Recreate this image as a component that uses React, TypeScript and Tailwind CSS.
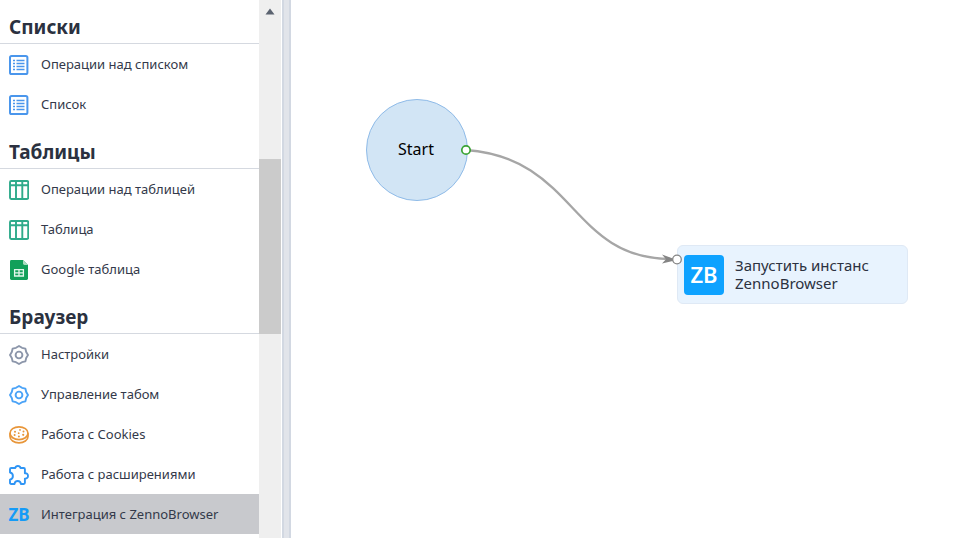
import type { ReactNode } from "react";

function ListIcon() {
  return (
    <svg viewBox="0 0 20 20" className="size-5 shrink-0" fill="none" stroke="#4a96ec">
      <rect x="1" y="1" width="17.4" height="18" rx="1.6" strokeWidth="2" />
      <path d="M4 5.500h2M4 8.500h2M4 11.500h2M4 14.500h2M7.500 5.500h8M7.500 8.500h8M7.500 11.500h8M7.500 14.500h8" strokeWidth="1.500" />
    </svg>
  );
}

function TableIcon() {
  return (
    <svg viewBox="0 0 20 20" className="size-5 shrink-0" fill="none" stroke="#2fab8b" strokeWidth="1.900">
      <rect x="1" y="1" width="18.2" height="18" rx="1.200" />
      <path d="M1 5.300h18.200M7 1v18M13.300 1v18" />
    </svg>
  );
}

function SheetIcon() {
  return (
    <svg viewBox="0 0 20 20" className="size-5 shrink-0">
      <path d="M2.400 0H14l5 5v13.600a1.400 1.400 0 0 1-1.400 1.400H2.400A1.400 1.400 0 0 1 1 18.600V1.400A1.400 1.400 0 0 1 2.400 0z" fill="#12a05a" />
      <path d="M14 0l5 5h-3.600A1.400 1.400 0 0 1 14 3.600z" fill="#a9dcc0" />
      <path d="M5.600 9.600h8.800v6.400H5.600zM5.600 12.800h8.800M10 9.600v6.400" fill="none" stroke="#e4f6ec" strokeWidth="1.300" />
    </svg>
  );
}

function GearIcon({ color }: { color: string }) {
  return (
    <svg viewBox="0 0 20 20" className="size-5 shrink-0" fill="none" stroke={color} strokeWidth="1.900" strokeLinejoin="round">
      <path d="M10 1L13 2.800L16.400 3.600L17.200 7L19 10L17.200 13L16.400 16.400L13 17.200L10 19L7 17.200L3.600 16.400L2.800 13L1 10L2.800 7L3.600 3.600L7 2.800z" />
      <circle cx="10" cy="10" r="3.400" />
    </svg>
  );
}

function CookieIcon() {
  return (
    <svg viewBox="0 0 20 20" className="size-5 shrink-0" fill="none" stroke="#e8963a" strokeWidth="1.700">
      <ellipse cx="10" cy="8.200" rx="9" ry="6.400" />
      <path d="M1 8.300v3.300c0 3.500 4 6.300 9 6.300s9-2.800 9-6.300V8.300" />
      <g fill="#e8963a" stroke="none">
        <circle cx="6" cy="6.800" r="1" />
        <circle cx="11" cy="4.900" r=".9" />
        <circle cx="14.500" cy="6.600" r="1" />
        <circle cx="9.700" cy="8.200" r=".9" />
        <circle cx="5.600" cy="9.900" r="1" />
        <circle cx="9.900" cy="11.500" r="1" />
        <circle cx="14.200" cy="9.800" r="1.100" />
      </g>
    </svg>
  );
}

function PuzzleIcon() {
  return (
    <svg viewBox="0 0 20 20" className="size-5 shrink-0" fill="none" stroke="#2f95f5" strokeWidth="1.900" strokeLinejoin="round">
      <path d="M1 4.200Q1 3 2.200 3H6.300Q6.700 1 8.900 1T11.500 3H14.700Q15.900 3 15.900 4.200V8.200C18 8 19 9.300 19 10.900S18 13.700 15.900 13.600V17.800Q15.900 19 14.700 19H11.900C11.700 17.100 10.500 16 8.700 16S5.700 17.100 5.500 19H2.200Q1 19 1 17.800V14.700C3 14.300 3.900 12.700 3.900 11S3 7.900 1 7.500z" />
    </svg>
  );
}

type Item = { label: string; icon: ReactNode; active?: boolean };

const groups: { title: string; items: Item[] }[] = [
  {
    title: "Списки",
    items: [
      { label: "Операции над списком", icon: <ListIcon /> },
      { label: "Список", icon: <ListIcon /> },
    ],
  },
  {
    title: "Таблицы",
    items: [
      { label: "Операции над таблицей", icon: <TableIcon /> },
      { label: "Таблица", icon: <TableIcon /> },
      { label: "Google таблица", icon: <SheetIcon /> },
    ],
  },
  {
    title: "Браузер",
    items: [
      { label: "Настройки", icon: <GearIcon color="#8c96aa" /> },
      { label: "Управление табом", icon: <GearIcon color="#4ba3f7" /> },
      { label: "Работа с Cookies", icon: <CookieIcon /> },
      { label: "Работа с расширениями", icon: <PuzzleIcon /> },
      {
        label: "Интеграция с ZennoBrowser",
        icon: (
          <span className="flex w-5 shrink-0 justify-center text-[17px] leading-5 font-bold text-[#159bf7]">ZB</span>
        ),
        active: true,
      },
    ],
  },
];

function Sidebar() {
  return (
    <nav className="w-[259px] shrink-0">
      {groups.map((group) => (
        <section key={group.title} className="group">
          <h2 className="flex h-[45px] items-center border-b border-[#d5d9e0] pt-[11px] pl-[9px] text-[19px] leading-6 font-bold text-[#2b3140] group-first:h-11">
            {group.title}
          </h2>
          {group.items.map((item) => (
            <button
              key={item.label}
              type="button"
              className={
                item.active
                  ? "flex h-10 w-full items-center gap-3 bg-[#c8c9cd] pt-0.5 pl-[9px] text-left text-[13px] whitespace-nowrap text-[#33394a]"
                  : "flex h-10 w-full items-center gap-3 pt-0.5 pl-[9px] text-left text-[13px] whitespace-nowrap text-[#33394a]"
              }
            >
              {item.icon}
              {item.label}
            </button>
          ))}
        </section>
      ))}
    </nav>
  );
}

function ScrollTrack() {
  return (
    <div className="flex w-[22px] shrink-0 flex-col bg-[#efefef]">
      <div className="flex h-[159px] justify-center pt-2">
        <svg viewBox="0 0 10 7" className="h-[7px] w-2.5" fill="#5b6370">
          <path d="M5 0.500L9.500 6.500H.5z" />
        </svg>
      </div>
      <div className="h-[175px] bg-[#cbcbcb]" />
    </div>
  );
}

function Canvas() {
  return (
    <main className="relative min-w-0 flex-1 overflow-hidden bg-white">
      <div className="absolute top-[99px] left-[75px] flex size-[102px] items-center justify-center rounded-full border border-[#8fbbe8] bg-[#d2e5f5] pr-0.5 pb-0.5 text-base text-black">
        Start
      </div>
      <div className="absolute top-[245px] left-[386px] flex h-[59px] w-[231px] items-center gap-[11px] rounded-md border border-[#dfe9f5] bg-[#e8f3fe] pl-[6px] text-[15px] leading-[18px] text-[#2b3140]">
        <div className="flex size-10 items-center justify-center rounded bg-[#0ea2ff] pb-0.5 text-[22px] leading-6 font-semibold text-white">
          ZB
        </div>
        <div className="pb-0.5">
          Запустить инстанс
          <br />
          ZennoBrowser
        </div>
      </div>
      <svg className="absolute top-0 left-0 h-[320px] w-[400px]" viewBox="0 0 400 320" fill="none">
        <path d="M175 150C285 158 279 258 379 259" stroke="#a6a6a6" strokeWidth="2.300" />
        <path d="M386 260L371 254.500L375 259.300L371 263.500z" fill="#858585" />
        <circle cx="175" cy="150" r="4.200" fill="#fff" stroke="#3aa335" strokeWidth="1.700" />
        <circle cx="386" cy="259.500" r="4.300" fill="#fff" stroke="#858585" strokeWidth="1.300" />
      </svg>
    </main>
  );
}

export default function App() {
  return (
    <div className="flex h-screen overflow-hidden bg-white font-['Noto_Sans',sans-serif]">
      <Sidebar />
      <ScrollTrack />
      <div className="ml-px w-[9px] shrink-0 border-x-2 border-[#d2d8e2] bg-[#e1e4ea]" />
      <Canvas />
    </div>
  );
}
